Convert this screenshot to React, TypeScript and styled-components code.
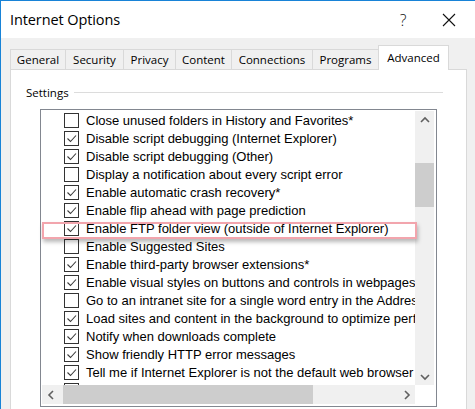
import React from "react";
import styled, { createGlobalStyle } from "styled-components";

const GlobalStyle = createGlobalStyle`
  html, body {
    margin: 0;
    padding: 0;
    background: #f0f0f0;
  }
  * { box-sizing: border-box; }
`;

const Window = styled.div`
  width: 475px;
  height: 409px;
  border-left: 1px solid #1883d7;
  border-top: 1px solid #1883d7;
  background: #f0f0f0;
  display: flex;
  flex-direction: column;
  overflow: hidden;
  font-family: "Open Sans", "Noto Sans", sans-serif;
`;

const TitleBar = styled.div`
  height: 37px;
  flex: none;
  background: #ffffff;
  display: flex;
  align-items: center;
  padding-left: 9px;
`;

const Title = styled.div`
  flex: 1;
  font-size: 14.5px;
  color: #000;
  letter-spacing: -0.1px;
`;

const CaptionButton = styled.div<{ $width: number }>`
  width: ${(p) => p.$width}px;
  height: 37px;
  display: flex;
  align-items: center;
  justify-content: center;
  color: #111;
  font-size: 16px;
  font-weight: 300;
`;

const TabStrip = styled.div`
  flex: none;
  display: flex;
  align-items: flex-end;
  padding: 7px 0 0 9px;
  position: relative;
  z-index: 1;
  margin-bottom: -1px;
`;

const Tab = styled.div<{ $width: number; $active?: boolean }>`
  width: ${(p) => p.$width}px;
  height: ${(p) => (p.$active ? 25 : 21)}px;
  margin-left: -1px;
  &:first-child { margin-left: 0; }
  border: 1px solid #d9d9d9;
  border-bottom: ${(p) => (p.$active ? "none" : "1px solid #d9d9d9")};
  background: ${(p) => (p.$active ? "#ffffff" : "#f0f0f0")};
  display: flex;
  align-items: center;
  justify-content: center;
  font-size: 11.5px;
  color: #000;
  padding-bottom: ${(p) => (p.$active ? 2 : 1)}px;
  position: relative;
  z-index: ${(p) => (p.$active ? 2 : 0)};
`;

const Panel = styled.div`
  flex: 1;
  margin-left: 9px;
  width: 457px;
  background: #ffffff;
  border: 1px solid #d9d9d9;
  border-bottom: none;
  display: flex;
  flex-direction: column;
`;

const GroupHeader = styled.div`
  display: flex;
  align-items: center;
  height: 18px;
  margin-top: 13px;
  padding-left: 15px;
  padding-right: 23px;
`;

const GroupLabel = styled.span`
  font-size: 11.5px;
  color: #000;
`;

const GroupRule = styled.div`
  flex: 1;
  height: 1px;
  background: #dcdcdc;
  margin-left: 5px;
`;

const ListBox = styled.div`
  position: relative;
  margin: 8px 0 0 29px;
  width: 397px;
  height: 298px;
  border: 1px solid #828790;
  padding: 1px 2px 2px 1px;
  display: grid;
  grid-template-columns: 1fr 19px;
  grid-template-rows: 1fr 19px;
`;

const ListContent = styled.div`
  overflow: hidden;
  font-family: "Liberation Sans", Arial, sans-serif;
  font-size: 13px;
  color: #000;
`;

const Row = styled.div`
  height: 18px;
  display: flex;
  align-items: center;
  padding-left: 22px;
  gap: 7px;
  white-space: nowrap;
`;

const Box = styled.span`
  flex: none;
  width: 15px;
  height: 15px;
  border: 1px solid #333333;
  background: #fff;
  display: flex;
  align-items: center;
  justify-content: center;
`;

const VScroll = styled.div`
  background: #f0f0f0;
  display: flex;
  flex-direction: column;
`;

const HScroll = styled.div`
  background: #f0f0f0;
  display: flex;
`;

const ArrowButton = styled.div<{ $vertical?: boolean }>`
  flex: none;
  width: ${(p) => (p.$vertical ? "100%" : "17px")};
  height: ${(p) => (p.$vertical ? "17px" : "100%")};
  display: flex;
  align-items: center;
  justify-content: center;
`;

const Track = styled.div<{ $vertical?: boolean }>`
  flex: 1;
  display: flex;
  flex-direction: ${(p) => (p.$vertical ? "column" : "row")};
`;

const Thumb = styled.div<{ $vertical?: boolean }>`
  background: #cdcdcd;
  flex: none;
  ${(p) => (p.$vertical ? "width: 100%;" : "height: 100%;")}
`;

const Corner = styled.div`
  background: #ffffff;
`;

const Highlight = styled.div`
  position: absolute;
  left: 1px;
  top: 112px;
  width: 375px;
  height: 17px;
  border: 2px solid #f2a5ad;
  box-shadow: 1px 3px 4px rgba(0, 0, 0, 0.28);
  pointer-events: none;
`;

const Check = () => (
  <svg width="13" height="13" viewBox="0 0 13 13">
    <polyline points="2.5,6.5 5.5,9.5 11,3.5" fill="none" stroke="#3a3a3a" strokeWidth="1.1" />
  </svg>
);

const Chevron = ({ dir }: { dir: "up" | "down" | "left" | "right" }) => {
  const pts = {
    up: "1,6 5,2 9,6",
    down: "1,2 5,6 9,2",
    left: "6,1 2,5 6,9",
    right: "2,1 6,5 2,9",
  }[dir];
  const vertical = dir === "up" || dir === "down";
  return (
    <svg width={vertical ? 10 : 8} height={vertical ? 8 : 10} viewBox={vertical ? "0 0 10 8" : "0 0 8 10"}>
      <polyline points={pts} fill="none" stroke="#606060" strokeWidth="1.6" />
    </svg>
  );
};

const tabs = [
  { label: "General", width: 56 },
  { label: "Security", width: 59 },
  { label: "Privacy", width: 53 },
  { label: "Content", width: 57 },
  { label: "Connections", width: 82 },
  { label: "Programs", width: 67 },
  { label: "Advanced", width: 71, active: true },
];

const settings: [string, boolean][] = [
  ["Close unused folders in History and Favorites*", false],
  ["Disable script debugging (Internet Explorer)", true],
  ["Disable script debugging (Other)", true],
  ["Display a notification about every script error", false],
  ["Enable automatic crash recovery*", true],
  ["Enable flip ahead with page prediction", true],
  ["Enable FTP folder view (outside of Internet Explorer)", true],
  ["Enable Suggested Sites", false],
  ["Enable third-party browser extensions*", true],
  ["Enable visual styles on buttons and controls in webpages", true],
  ["Go to an intranet site for a single word entry in the Address bar", false],
  ["Load sites and content in the background to optimize performance", true],
  ["Notify when downloads complete", true],
  ["Show friendly HTTP error messages", true],
  ["Tell me if Internet Explorer is not the default web browser", true],
  ["Use most recent order when switching tabs with Ctrl+Tab", true],
];

export default function App() {
  return (
    <>
      <GlobalStyle />
      <Window>
        <TitleBar>
          <Title>Internet Options</Title>
          <CaptionButton $width={46}>?</CaptionButton>
          <CaptionButton $width={46} style={{ marginRight: 3 }}>
            <svg width="14" height="14" viewBox="0 0 14 14">
              <path d="M1 1 L13 13 M13 1 L1 13" stroke="#111" strokeWidth="1.1" />
            </svg>
          </CaptionButton>
        </TitleBar>
        <TabStrip>
          {tabs.map((t) => (
            <Tab key={t.label} $width={t.width} $active={t.active}>
              {t.label}
            </Tab>
          ))}
        </TabStrip>
        <Panel>
          <GroupHeader>
            <GroupLabel>Settings</GroupLabel>
            <GroupRule />
          </GroupHeader>
          <ListBox>
            <ListContent>
              {settings.map(([label, on]) => (
                <Row key={label}>
                  <Box>{on && <Check />}</Box>
                  <span>{label}</span>
                </Row>
              ))}
            </ListContent>
            <VScroll>
              <ArrowButton $vertical>
                <Chevron dir="up" />
              </ArrowButton>
              <Track $vertical>
                <Thumb $vertical style={{ marginTop: 35, height: 44 }} />
              </Track>
              <ArrowButton $vertical>
                <Chevron dir="down" />
              </ArrowButton>
            </VScroll>
            <HScroll>
              <ArrowButton>
                <Chevron dir="left" />
              </ArrowButton>
              <Track>
                <Thumb style={{ marginLeft: 4, width: 250 }} />
              </Track>
              <ArrowButton>
                <Chevron dir="right" />
              </ArrowButton>
            </HScroll>
            <Corner />
            <Highlight />
          </ListBox>
        </Panel>
      </Window>
    </>
  );
}
